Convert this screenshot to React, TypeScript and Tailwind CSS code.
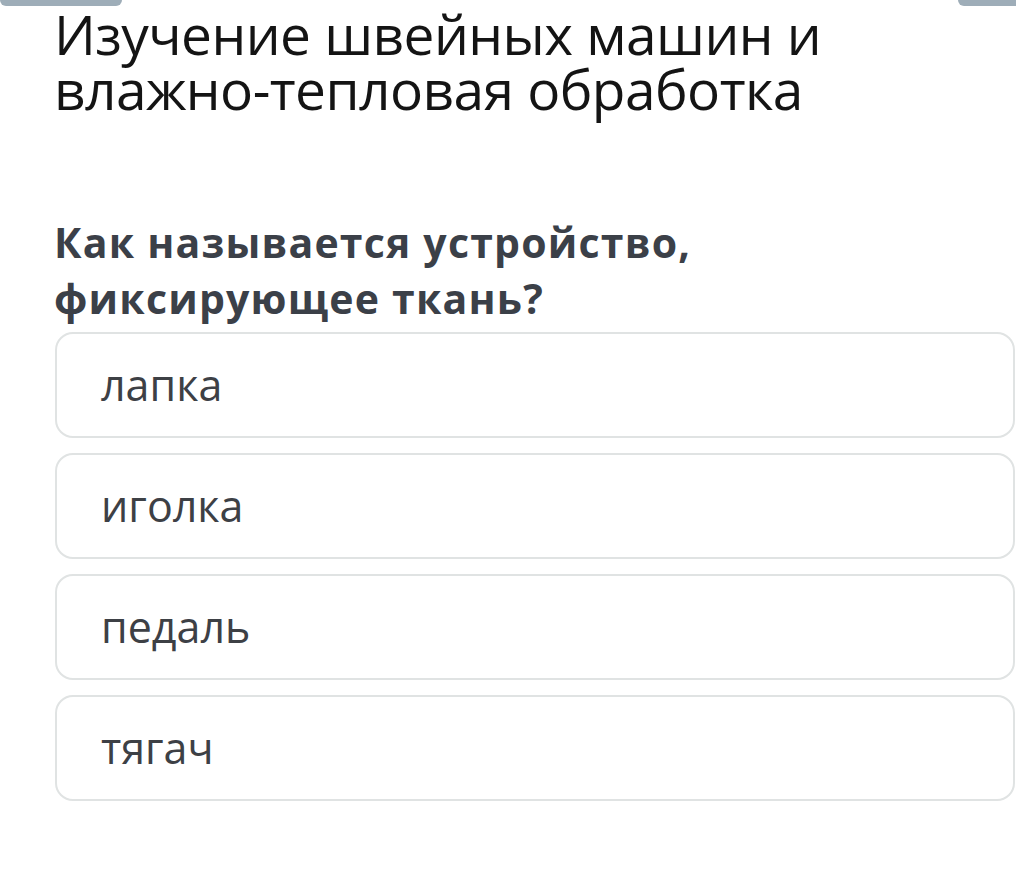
export default function App() {
  const options = ['лапка', 'иголка', 'педаль', 'тягач'];

  return (
    <div className="relative w-[1016px] h-[896px] bg-white overflow-hidden" style={{ fontFamily: '"Open Sans", "Noto Sans", sans-serif' }}>
      {/* top tabs */}
      <div className="absolute left-0 top-0 w-[122px] h-[6px] rounded-b-[6px] bg-[#9eadb8]" />
      <div className="absolute right-0 top-0 w-[58px] h-[6px] rounded-bl-[6px] bg-[#9eadb8]" />

      <div className="pl-[54px] pt-[6px]">
        <h1 className="text-[55px] leading-[55px] text-[#141414] font-normal tracking-[-0.55px]">
          Изучение швейных машин и
          <br />
          влажно-тепловая обработка
        </h1>

        <h2 className="mt-[98px] text-[41px] leading-[56px] font-bold text-[#3b4048] tracking-[1.2px]">
          Как называется устройство,
          <br />
          фиксирующее ткань?
        </h2>
      </div>

      <div className="mt-[6px] pl-[55px] pr-[1px] flex flex-col gap-[15px]">
        {options.map((o) => (
          <div
            key={o}
            className="h-[106px] border-[2px] border-[#e0e3e3] rounded-[18px] flex items-center pl-[44px] text-[43px] text-[#3d4045]"
          >
            {o}
          </div>
        ))}
      </div>
    </div>
  );
}
